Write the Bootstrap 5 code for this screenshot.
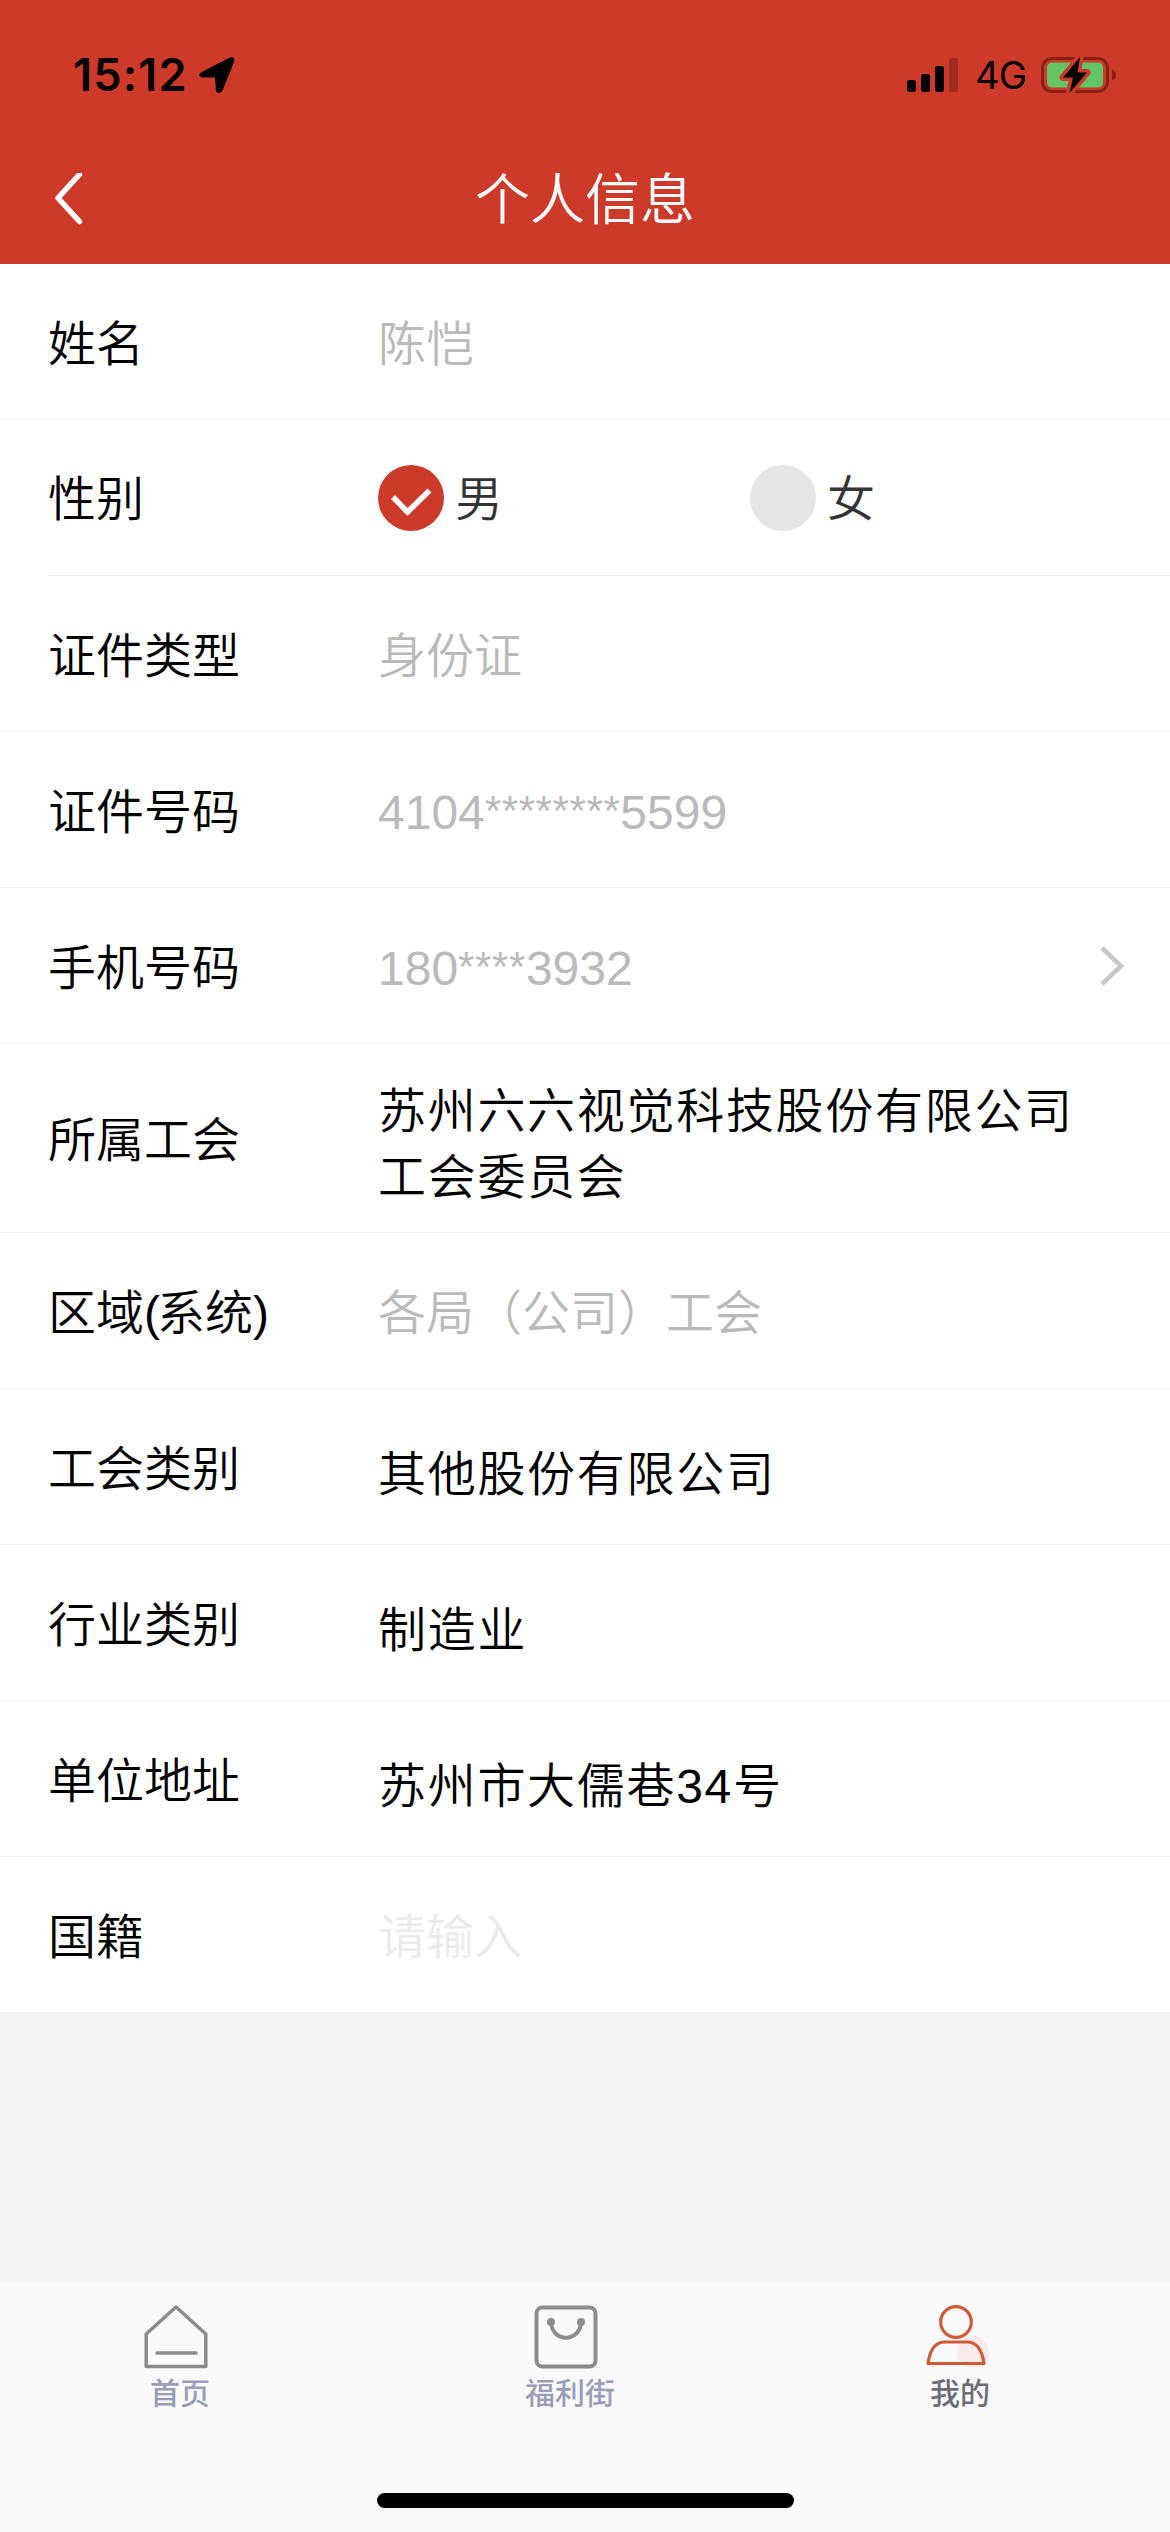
<!DOCTYPE html>
<html lang="zh-CN">
<head>
<meta charset="utf-8">
<meta name="viewport" content="width=device-width, initial-scale=1">
<title>个人信息</title>
<link href="https://cdn.jsdelivr.net/npm/bootstrap@5.3.0/dist/css/bootstrap.min.css" rel="stylesheet">
<style>
  body { background: #f5f5f5; color: #000; font: 350 48px/66px "Liberation Sans", "Noto Sans CJK SC", sans-serif; }
  svg { display: block; flex: none; }
  .screen { min-height: 2532px; }
  .top { background: #cd3a29; height: 264px; }
  .status { height: 134px; padding: 16px 53px 0 73px; font-family: Inter, sans-serif; color: #000; }
  .clock { font-size: 45px; font-weight: 600; letter-spacing: 1.2px; width: 126px; white-space: nowrap; }
  .net { font-size: 38px; font-weight: 400; letter-spacing: -.8px; width: 66px; padding-left: 16px; }
  .titlebar { height: 130px; padding: 2px 54px 0; }
  .titlebar h1 { font-size: 55px; font-weight: 350; line-height: 80px; }
  .side { width: 30px; }
  .info { height: 156px; border: 0; border-bottom: 2px solid #f2f2f2; padding: 6px 45px 0 48px; color: #000; background: #fff; border-radius: 0 !important; }
  .info:last-child { height: 155px; }
  .info.tall { height: 189px; }
  .info.inset-line { border-bottom: 0; padding-bottom: 2px; background: linear-gradient(#f0f0f0, #f0f0f0) 48px 155px / 1122px 1px no-repeat #fff; }
  .info svg { margin-top: -5px; }
  .key { width: 330px; flex: none; }
  .muted { color: #bababa; }
  .hint { color: #ebebeb; }
  .val { letter-spacing: 1.7px; padding-top: 10px; }
  .tall .val { padding-top: 7px; width: 710px; }
  .stars { font-size: 42px; line-height: 1; letter-spacing: .6px; vertical-align: 4px; }
  .paren { letter-spacing: -3px; }
  .choice { width: 372px; color: #333; gap: 11px; }
  .tabs { height: 250px; background: #fafafa; }
  .tab { font-size: 30px; line-height: 40px; font-weight: 500; color: #999db9; padding: 21px 30px 0 0; text-decoration: none; }
  .tab svg { margin: 0 8px 5px 0; }
  .tab.on { color: #6c6c78; }
  .homebar { width: 417px; height: 15px; border-radius: 8px; background: #000; margin: 0 auto 24px; }
</style>
</head>
<body>
<div class="screen d-flex flex-column">
  <header class="top">
    <div class="status d-flex align-items-center">
      <span class="clock">15:12</span>
      <svg width="36" height="38" viewBox="0 0 36 36"><path d="M3 15 29.500 1.200Q36-1.500 35.200 4.500L23.500 33.500Q20.500 38 17 34.500L16 20.500H3Q-2.500 18 3 15Z"/></svg>
      <svg class="ms-auto" width="52" height="34" viewBox="0 0 52 34"><rect y="22" width="9" height="12" rx="2.500"/><rect x="14" y="16" width="9" height="18" rx="2.500"/><rect x="28" y="8" width="9" height="26" rx="2.500"/><rect x="42" width="9" height="34" rx="2.500" opacity=".22"/></svg>
      <span class="net">4G</span>
      <svg class="ms-3" width="76" height="38" viewBox="0 0 76 38"><rect x="1.500" y="2.500" width="65" height="33" rx="9.500" fill="none" stroke="#872218" stroke-width="3"/><path d="M71 13.500q4 1.500 4 5.500t-4 5.500z" fill="#872218"/><rect x="6" y="6.500" width="56" height="25" rx="5" fill="#63c466"/><path d="M39 1 22 21.500h10L28.500 37 46 16.500H36.500Z" fill="#000" stroke="#cd3a29" stroke-width="7" paint-order="stroke" stroke-linejoin="round"/></svg>
    </div>
    <div class="titlebar d-flex align-items-center justify-content-between text-white">
      <svg class="side" width="30" height="54" viewBox="0 0 30 54"><path d="M25.500 3.500 4 27 25.500 50.500" transform="translate(0 -2)" fill="none" stroke="#fff" stroke-width="5.500" stroke-linecap="round" stroke-linejoin="round"/></svg>
      <h1 class="m-0">个人信息</h1>
      <span class="side"></span>
    </div>
  </header>

  <main class="list-group list-group-flush rounded-0">
    <div class="list-group-item info d-flex align-items-center"><span class="key">姓名</span><span class="muted">陈恺</span></div>
    <div class="list-group-item info inset-line d-flex align-items-center">
      <span class="key">性别</span>
      <span class="choice d-flex align-items-center"><svg width="66" height="66" viewBox="0 0 66 66"><circle cx="33" cy="33" r="33" fill="#cd3a29"/><path d="M15 32 29.500 47 51.500 25.500" fill="none" stroke="#fff" stroke-width="5.500"/></svg>男</span>
      <span class="choice d-flex align-items-center"><svg width="66" height="66" viewBox="0 0 66 66"><circle cx="33" cy="33" r="33" fill="#e4e5e7"/></svg>女</span>
    </div>
    <div class="list-group-item info d-flex align-items-center"><span class="key">证件类型</span><span class="muted">身份证</span></div>
    <div class="list-group-item info d-flex align-items-center"><span class="key">证件号码</span><span class="muted">4104<span class="stars">********</span>5599</span></div>
    <div class="list-group-item info d-flex align-items-center">
      <span class="key">手机号码</span><span class="muted">180<span class="stars">****</span>3932</span>
      <svg class="ms-auto" width="26" height="42" viewBox="0 0 26 42"><path d="M3 3 22 21 3 39" fill="none" stroke="#c7c7c7" stroke-width="4.500"/></svg>
    </div>
    <div class="list-group-item info tall d-flex align-items-center"><span class="key">所属工会</span><span class="val">苏州六六视觉科技股份有限公司工会委员会</span></div>
    <div class="list-group-item info d-flex align-items-center"><span class="key">区域<span class="paren">(</span>系统<span class="paren">)</span></span><span class="muted">各局（公司）工会</span></div>
    <div class="list-group-item info d-flex align-items-center"><span class="key">工会类别</span><span class="val">其他股份有限公司</span></div>
    <div class="list-group-item info d-flex align-items-center"><span class="key">行业类别</span><span class="val">制造业</span></div>
    <div class="list-group-item info d-flex align-items-center"><span class="key">单位地址</span><span class="val">苏州市大儒巷34号</span></div>
    <div class="list-group-item info d-flex align-items-center"><span class="key">国籍</span><span class="hint">请输入</span></div>
  </main>

  <footer class="tabs mt-auto d-flex flex-column justify-content-between">
    <nav class="row g-0">
      <a class="col tab d-flex flex-column align-items-center" href="#"><svg width="66" height="66" viewBox="0 0 66 66" fill="none" stroke="#8c8c8c" stroke-width="3.500" stroke-linejoin="round" stroke-linecap="round"><path d="M3.200 31 33 4 62.800 31V63.500H3.200Z"/><path d="M14 50H53"/></svg>首页</a>
      <a class="col tab d-flex flex-column align-items-center" href="#"><svg width="66" height="66" viewBox="0 0 66 66" fill="none" stroke="#8c8c8c" stroke-width="4"><rect x="3.500" y="4.500" width="59" height="59" rx="6"/><path d="M18 19C19 40 47 40 48 19" stroke-linecap="round"/><circle cx="18" cy="19" r="4" fill="#8c8c8c" stroke="none"/><circle cx="48" cy="19" r="4" fill="#8c8c8c" stroke="none"/></svg>福利街</a>
      <a class="col tab on d-flex flex-column align-items-center" href="#"><svg width="66" height="66" viewBox="0 0 66 66" fill="none" stroke="#cf5a38" stroke-width="3.200"><circle cx="50" cy="49" r="16" fill="#fbeae9" stroke="none"/><circle cx="33" cy="19" r="15.300"/><path d="M5 60.500Q8 39 22 39H44Q58 39 61 60.500Z" stroke-linejoin="round"/></svg>我的</a>
    </nav>
    <div class="homebar"></div>
  </footer>
</div>
<script src="https://cdn.jsdelivr.net/npm/bootstrap@5.3.0/dist/js/bootstrap.bundle.min.js"></script>
</body>
</html>
